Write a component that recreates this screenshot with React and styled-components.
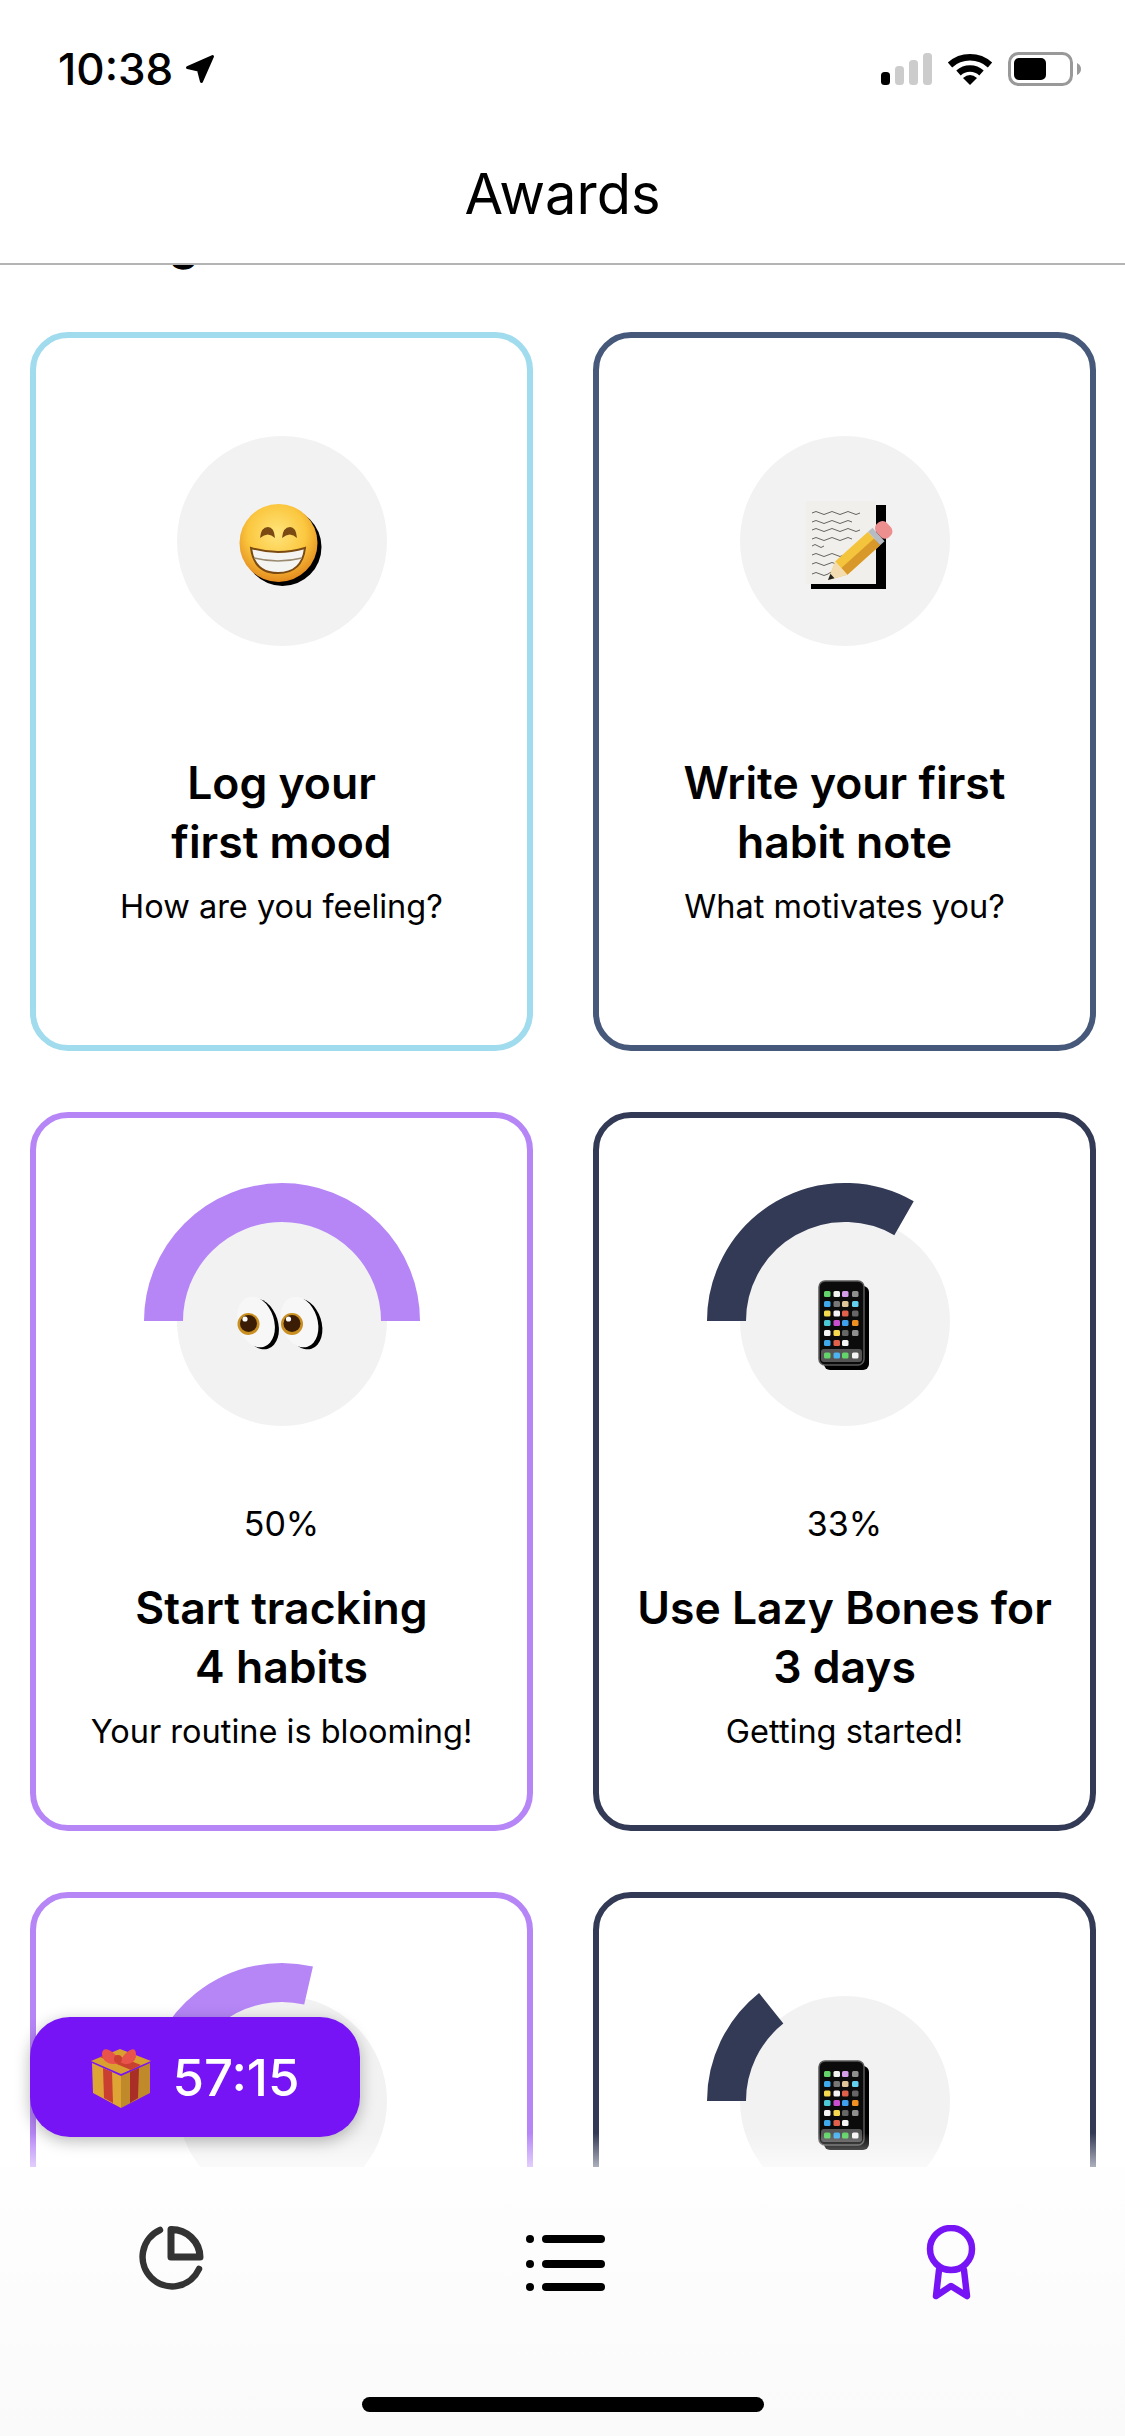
import React from "react";
import styled, { createGlobalStyle } from "styled-components";

const Global = createGlobalStyle`
  html, body { margin: 0; padding: 0; background: #fff; }
  * { box-sizing: border-box; }
  body { font-family: Inter, "Noto Sans", "Liberation Sans", sans-serif; color: #000; }
`;

const Screen = styled.div`
  width: 1125px;
  height: 2436px;
  display: flex;
  flex-direction: column;
  overflow: hidden;
  background: #fff;
`;
const Header = styled.header`
  height: 265px;
  flex: none;
  border-bottom: 2px solid #b4b4b4;
  background: #fff;
  position: relative;
  z-index: 2;
`;
const StatusBar = styled.div`
  height: 130px;
  padding: 46px 43px 0 58px;
  display: flex;
  justify-content: space-between;
  align-items: flex-start;
`;
const Clock = styled.div`
  display: flex;
  align-items: center;
  gap: 12px;
  font-size: 44px;
  line-height: 46px;
  font-weight: 500;
`;
const StatusIcons = styled.div`
  display: flex;
  align-items: flex-start;
  gap: 15px;
  padding-top: 6px;
`;
const NavTitle = styled.h1`
  margin: 0;
  height: 133px;
  display: flex;
  align-items: center;
  justify-content: center;
  font-size: 56px;
  font-weight: 400;
  padding-bottom: 6px;
`;
const ScrollArea = styled.main`
  flex: 1;
  min-height: 0;
  position: relative;
  overflow: hidden;
`;
const SectionTitle = styled.h2`
  margin: -53px 0 60px 30px;
  height: 60px;
  font-size: 48px;
  line-height: 60px;
  font-weight: 600;
`;
const Grid = styled.div`
  display: grid;
  grid-template-columns: 503px 503px;
  grid-auto-rows: 719px;
  column-gap: 60px;
  row-gap: 61px;
  padding: 0 29px 0 30px;
`;
const Card = styled.article`
  border: 6px solid ${(p) => p.$accent};
  border-radius: 38px;
  background: #fff;
  padding-top: 98px;
  display: flex;
  flex-direction: column;
  align-items: center;
  text-align: center;
`;
const Medal = styled.div`
  position: relative;
  width: 210px;
  height: 210px;
  flex: none;
  border-radius: 50%;
  background: #f2f2f2;
  margin-bottom: 75px;
  display: flex;
  align-items: center;
  justify-content: center;
`;
const ArcSvg = styled.svg`
  position: absolute;
  left: -35px;
  top: -35px;
  width: 280px;
  height: 280px;
`;
const EmojiSvg = styled.svg`
  position: relative;
  width: 90px;
  height: 90px;
  overflow: visible;
`;
const Percent = styled.div`
  height: 45px;
  font-size: 34px;
  line-height: 45px;
  font-weight: 400;
`;
const Title = styled.h3`
  margin: 33px 0 0;
  font-size: 44.5px;
  line-height: 59px;
  font-weight: 600;
  white-space: pre-line;
`;
const Sub = styled.p`
  margin: 14px 0 0;
  font-size: 32.5px;
  line-height: 42px;
  font-weight: 400;
`;
const Fade = styled.div`
  position: absolute;
  left: 0;
  right: 0;
  bottom: 0;
  height: 34px;
  background: linear-gradient(rgba(255,255,255,0), rgba(255,255,255,0.6));
`;
const TimerPill = styled.div`
  position: absolute;
  left: 30px;
  bottom: 30px;
  width: 330px;
  height: 120px;
  border-radius: 40px;
  background: #7714f6;
  box-shadow: 0 4px 16px rgba(0, 0, 0, 0.28);
  display: flex;
  align-items: center;
  justify-content: center;
  gap: 20px;
  color: #fff;
  font-size: 51px;
  font-weight: 500;
`;
const GiftSvg = styled.svg`
  width: 62px;
  height: 62px;
  flex: none;
`;
const TabBar = styled.nav`
  height: 269px;
  flex: none;
  background: linear-gradient(#fefefe, #fafafa);
  display: flex;
  flex-direction: column;
  padding-top: 58px;
  position: relative;
`;
const TabRow = styled.div`
  display: flex;
  justify-content: space-between;
  align-items: flex-start;
  height: 75px;
  padding: 0 149px 0 138px;
`;
const HomeBar = styled.div`
  width: 402px;
  height: 15px;
  border-radius: 8px;
  background: #000;
  align-self: center;
  margin-top: 97px;
`;

const Signal = () => (
  <svg width="51" height="34" viewBox="0 0 51 34">
    <rect x="0" y="20" width="9" height="13" rx="3.5" fill="#000" />
    <rect x="14" y="14" width="9" height="19" rx="3.5" fill="#ccc" />
    <rect x="28" y="8" width="9" height="25" rx="3.5" fill="#ccc" />
    <rect x="42" y="1" width="9" height="32" rx="3.5" fill="#ccc" />
  </svg>
);
const Wifi = () => (
  <svg width="46" height="34" viewBox="0 0 46 34">
    <path d="M3 13 A30 30 0 0 1 43 13" fill="none" stroke="#000" strokeWidth="6.5" />
    <path d="M11.5 21 A17 17 0 0 1 34.5 21" fill="none" stroke="#000" strokeWidth="6.5" />
    <path d="M16 26 Q23 20 30 26 L23 33 Z" fill="#000" />
  </svg>
);
const Battery = () => (
  <svg width="74" height="34" viewBox="0 0 74 34">
    <rect x="1.5" y="1.5" width="62" height="31" rx="9" fill="none" stroke="#999" strokeWidth="3" />
    <rect x="6" y="6" width="32" height="22" rx="5" fill="#000" />
    <path d="M69 11 Q73 13 73 17 Q73 21 69 23 Z" fill="#999" />
  </svg>
);
const LocationArrow = () => (
  <svg width="30" height="30" viewBox="0 0 30 30">
    <path d="M2.5 13.5 L27.5 2.5 L16.5 27.5 L13.5 16 Z" fill="#000" stroke="#000" strokeWidth="3" strokeLinejoin="round" />
  </svg>
);

const Arc = ({ pct, color }) => {
  const deg = pct * 3.6;
  const rad = (Math.PI / 180) * (deg - 90);
  const r = 118.5;
  const x = 140 + r * Math.cos(rad - Math.PI / 2);
  const y = 140 + r * Math.sin(rad - Math.PI / 2);
  const d = `M${140 - r} 140 A${r} ${r} 0 0 1 ${x.toFixed(2)} ${y.toFixed(2)}`;
  return (
    <ArcSvg viewBox="0 0 280 280">
      <path d={d} fill="none" stroke={color} strokeWidth="39" />
    </ArcSvg>
  );
};

const Grin = () => (
  <EmojiSvg viewBox="0 0 90 90">
    <defs>
      <radialGradient id="face" cx="48%" cy="38%" r="62%">
        <stop offset="0" stopColor="#ffe57c" />
        <stop offset="0.6" stopColor="#fbc73f" />
        <stop offset="1" stopColor="#e38a1d" />
      </radialGradient>
    </defs>
    <circle cx="45.5" cy="51" r="39" fill="#000" />
    <circle cx="41.5" cy="47" r="39" fill="url(#face)" />
    <path d="M23 42 Q24 31 31 31 Q37 31 38 42 Q31 35 23 42 Z" fill="#7a4a12" />
    <path d="M45 42 Q46 31 53 31 Q59 31 60 42 Q53 35 45 42 Z" fill="#7a4a12" />
    <path d="M14 52 Q41 60 68 52 Q65 77 41 77 Q17 77 14 52 Z" fill="#f4f4f2" stroke="#7a4a12" strokeWidth="2" />
    <path d="M17 62 Q41 68 65 62" fill="none" stroke="#9a8a70" strokeWidth="1.5" />
  </EmojiSvg>
);

const Memo = () => (
  <EmojiSvg viewBox="0 0 90 90">
    <rect x="11" y="9" width="75" height="84" fill="#000" />
    <rect x="6" y="5" width="70" height="83" fill="#f0efec" />
    <g fill="none" stroke="#55534e" strokeWidth="0.9">
      <path d="M12 17 q4 -3 8 0 t8 0 t8 0 t8 0 t8 0 t8 0" />
      <path d="M12 26 q4 -3 8 0 t8 0 t8 0 t8 0 t8 0" />
      <path d="M12 34 q4 -3 8 0 t8 0 t8 0 t8 0 t8 0 t8 0" />
      <path d="M12 43 q4 -3 8 0 t8 0 t8 0 t8 0 t8 0" />
      <path d="M12 50 q3 -3 6 0 t6 0" />
      <path d="M12 59 q4 -3 8 0 t8 0 t8 0 t8 0" />
      <path d="M12 68 q4 -3 8 0 t8 0 t8 0 t8 0 t8 0" />
      <path d="M12 78 q4 -3 8 0 t8 0 t4 0" />
    </g>
    <path d="M78 33 l9 8 l-5 5 l-9 -6 Z" fill="#000" />
    <g transform="rotate(-42 28 84)">
      <path d="M28 84 L46 75 H90 V93 H46 Z" fill="#f4c43c" />
      <path d="M46 84 H90 V93 H46 Z" fill="#d9982a" />
      <path d="M28 84 L46 75 V93 Z" fill="#f3dcb0" />
      <path d="M28 84 L34 81 V87 Z" fill="#222" />
      <rect x="90" y="75" width="6" height="18" fill="#b7bcc2" />
      <rect x="96" y="75" width="14" height="18" rx="6" fill="#ee8f8f" />
    </g>
  </EmojiSvg>
);

const Eyes = () => {
  const eye = (dx) => (
    <g key={dx} transform={`translate(${dx} 0)`}>
      <ellipse cx="23" cy="48" rx="18" ry="26" transform="rotate(-18 23 48)" fill="#000" />
      <ellipse cx="19" cy="46" rx="18" ry="26" transform="rotate(-18 19 46)" fill="#f7f7f7" />
      <circle cx="11.5" cy="48" r="11" fill="#c98f20" />
      <circle cx="11.5" cy="47.5" r="8.5" fill="#3b1d05" />
      <circle cx="8" cy="43" r="2.6" fill="#fff" />
    </g>
  );
  return <EmojiSvg viewBox="0 0 90 90">{[0, 43.5].map(eye)}</EmojiSvg>;
};

const appRows = [
  ["#63d46a", "#f2f2f2", "#d49be8", "#8e8e8e"],
  ["#3fa9ee", "#777", "#e0c49a", "#62d0ef"],
  ["#f5d94f", "#f5f5f5", "#e0604c", "#666"],
  ["#4cc9d6", "#c94fd0", "#3fa0ee", "#f09020"],
  ["#f5f5f5", "#f5d94f", "#666", "#8e8e8e"],
  ["#3fa9ee", "#e0604c", "#f5f5f5", null],
];
const colX = [24, 33.5, 42, 52];
const rowY = [15, 25, 34.5, 44, 54, 64];
const Phone = () => (
  <EmojiSvg viewBox="0 0 90 90">
    <rect x="24" y="10" width="45" height="84" rx="6" fill="#000" />
    <rect x="19" y="5" width="45" height="84" rx="6" fill="#0b0b0b" stroke="#5a5a5a" strokeWidth="1.5" />
    {appRows.map((row, r) =>
      row.map((c, i) => c && <rect key={`${r}-${i}`} x={colX[i]} y={rowY[r]} width="6.5" height="6" rx="1.5" fill={c} />)
    )}
    <rect x="21" y="73" width="41" height="13" rx="3" fill="#555" />
    {["#63d46a", "#4cb4f0", "#63d46a", "#f5f5f5"].map((c, i) => (
      <rect key={c + i} x={colX[i]} y="76.5" width="6.5" height="6" rx="1.5" fill={c} />
    ))}
  </EmojiSvg>
);

const Gift = () => (
  <GiftSvg viewBox="0 0 62 62">
    <path d="M31 30 L60 17 L60 47 L31 62 Z" fill="#c08a2a" />
    <path d="M31 30 L2 17 L3 47 L31 62 Z" fill="#dfa534" />
    <path d="M1 15 L30 3 L61 15 L31 28 Z" fill="#d9a030" />
    <path d="M13 22 L22 26 L23 57 L14 52 Z" fill="#c93f30" />
    <path d="M40 26 L49 22 L48 52 L40 57 Z" fill="#a92f26" />
    <path d="M10 11 L20 7 L51 19 L41 24 Z" fill="#c93f30" />
    <path d="M30 15 C22 2 12 0 12 8 C12 16 22 21 30 16 C38 21 47 16 46 8 C46 0 38 2 30 15 Z" fill="#e8544a" />
    <circle cx="28" cy="13" r="4" fill="#c93f30" />
  </GiftSvg>
);

const PieIcon = () => (
  <svg width="66" height="66" viewBox="0 0 66 66" fill="none" stroke="#333" strokeWidth="6.5" strokeLinecap="round" strokeLinejoin="round">
    <path d="M22 5 A29.5 29.5 0 1 0 61 44" />
    <path d="M33 4.5 A28.5 28 0 0 1 62 32 H33 Z" strokeWidth="7" />
  </svg>
);
const ListIcon = () => (
  <svg width="79" height="75" viewBox="0 0 79 75" fill="#000">
    {[14, 39, 62].map((y) => (
      <g key={y}>
        <circle cx="4" cy={y} r="4" />
        <rect x="16" y={y - 4} width="63" height="8" rx="4" />
      </g>
    ))}
  </svg>
);
const AwardIcon = () => (
  <svg width="50" height="75" viewBox="0 0 50 75" fill="none" stroke="#7714f6" strokeWidth="6.5" strokeLinejoin="round" strokeLinecap="round">
    <circle cx="25" cy="24" r="21" />
    <path d="M13 45 L10 71 L25 61 L41 71 L38 45" />
  </svg>
);

const awards = [
  { accent: "#a1dbee", emoji: Grin, title: "Log your\nfirst mood", sub: "How are you feeling?" },
  { accent: "#46597a", emoji: Memo, title: "Write your first\nhabit note", sub: "What motivates you?" },
  { accent: "#b686f7", emoji: Eyes, pct: 50, title: "Start tracking\n4 habits", sub: "Your routine is blooming!" },
  { accent: "#333a56", emoji: Phone, pct: 33.3, label: "33%", title: "Use Lazy Bones for\n3 days", sub: "Getting started!" },
  { accent: "#b686f7", emoji: Eyes, pct: 28.6, label: "29%", title: "Start tracking\n7 habits", sub: "Keep it growing!" },
  { accent: "#333a56", emoji: Phone, pct: 14.3, label: "14%", title: "Use Lazy Bones for\n7 days", sub: "A whole week!" },
];

export default function App() {
  return (
    <Screen>
      <Global />
      <Header>
        <StatusBar>
          <Clock>
            10:38
            <LocationArrow />
          </Clock>
          <StatusIcons>
            <Signal />
            <Wifi />
            <Battery />
          </StatusIcons>
        </StatusBar>
        <NavTitle>Awards</NavTitle>
      </Header>
      <ScrollArea>
        <SectionTitle>Getting started</SectionTitle>
        <Grid>
          {awards.map((a) => {
            const Emoji = a.emoji;
            return (
              <Card key={a.title} $accent={a.accent}>
                <Medal>
                  {a.pct != null && <Arc pct={a.pct} color={a.accent} />}
                  <Emoji />
                </Medal>
                {a.pct != null && <Percent>{a.label || `${a.pct}%`}</Percent>}
                <Title>{a.title}</Title>
                <Sub>{a.sub}</Sub>
              </Card>
            );
          })}
        </Grid>
        <Fade />
        <TimerPill>
          <Gift />
          57:15
        </TimerPill>
      </ScrollArea>
      <TabBar>
        <TabRow>
          <PieIcon />
          <ListIcon />
          <AwardIcon />
        </TabRow>
        <HomeBar />
      </TabBar>
    </Screen>
  );
}
